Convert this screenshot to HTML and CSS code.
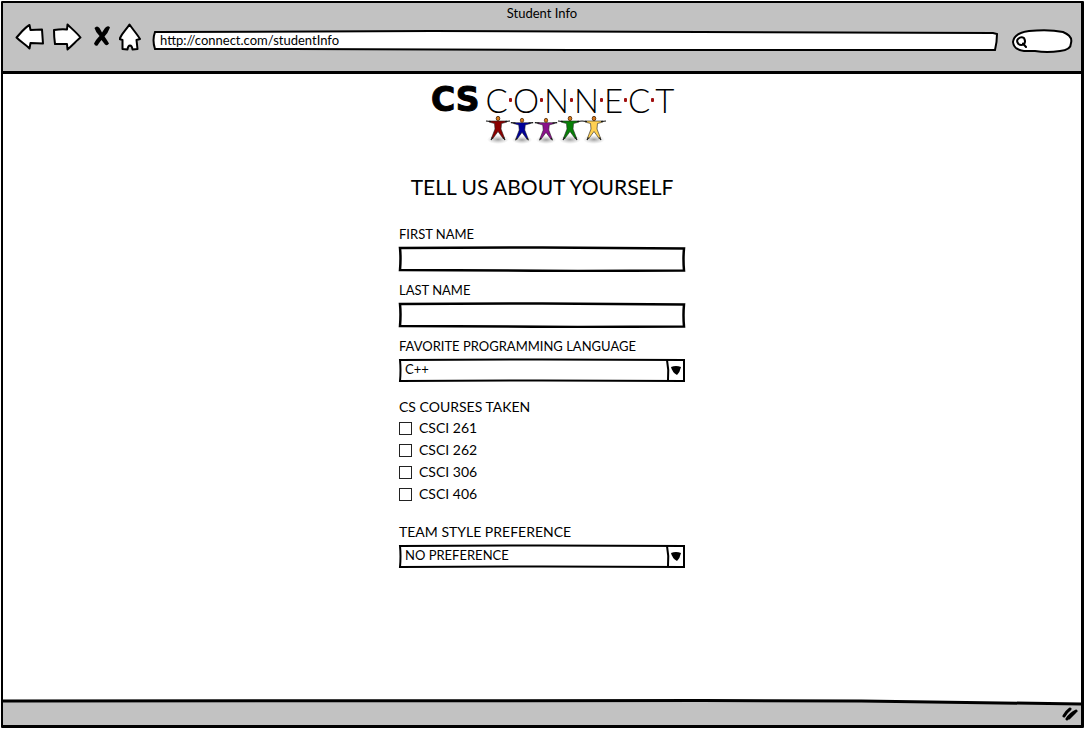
FILE: index.html
```html
<!DOCTYPE html>
<html lang="en">
<head>
<meta charset="utf-8">
<meta name="viewport" content="width=device-width, initial-scale=1">
<title>Student Info</title>
<link rel="stylesheet" href="styles.css">
</head>
<body>
<div class="window">
  <header class="chrome">
    <div class="window-title">Student Info</div>
    <div class="toolbar">
      <nav class="nav-buttons" aria-label="Browser">
        <button type="button" class="nav-button" aria-label="Back">
          <svg width="30" height="30" viewBox="0 0 30 30"><path class="ink" d="M1.5 14.500 C5 11 9 5 14.500 2 L15.500 7 L27 6.500 Q27.500 14 28 20.500 L15.500 20 L14.500 25.500 C10 21 6 19 1.500 14.500Z"/></svg>
        </button>
        <button type="button" class="nav-button" aria-label="Forward">
          <svg width="30" height="30" viewBox="0 0 30 30"><path class="ink" d="M1 7 Q8 6 14 6.500 L14.500 1.500 C18 5 24 10 27.500 14.500 C24 17 20 22 14.500 26.500 L14 21 L2 21 Q1 14 1 7Z"/></svg>
        </button>
        <button type="button" class="nav-button narrow" aria-label="Stop">
          <svg width="18" height="30" viewBox="0 0 18 30"><path d="M1.500 5 Q4 2 6.500 5 L9 9.500 L12 5 Q15 2 17 4.500 Q15 10 11.500 13.500 Q14 17 16 20.500 Q14 23.500 12 21.500 L8.500 17 Q6 20 4.500 22.500 Q2 23.500 1 20.500 Q3 16.500 6.500 13 Q2.500 9 1.500 5Z"/></svg>
        </button>
        <button type="button" class="nav-button home" aria-label="Home">
          <svg width="24" height="30" viewBox="0 0 24 30"><path class="ink" d="M10.500 1.500 C13.500 6 18 11 21 16 L17.500 17 L18.500 26 L13.500 26.500 Q13 22.500 11 22.500 Q9 22.500 8.500 26.500 L3.500 26 L3.500 17 L.500 16 C3 10 7 7 10.500 1.500Z"/></svg>
        </button>
      </nav>
      <input class="address" type="text" aria-label="Address" value="http://connect.com/studentInfo">
      <label class="search">
        <svg class="search-icon" width="12" height="12" viewBox="0 0 12 12"><path class="ink" d="M2 3 Q5 0 8 2 Q10 6 8 8 Q5 10 2.500 8 Q0 5 2 3Z M7 7.500 L10 11"/></svg>
        <input class="search-input" type="search" aria-label="Search">
      </label>
    </div>
  </header>

  <main class="page">
    <div class="logo">
      <div class="wordmark">
        <b class="cs">CS</b>
        <span class="letter">C</span><i class="dot"></i><span class="letter">O</span><i class="dot"></i><span class="letter">N</span><i class="dot"></i><span class="letter">N</span><i class="dot"></i><span class="letter">E</span><i class="dot"></i><span class="letter">C</span><i class="dot"></i><span class="letter">T</span>
      </div>
      <svg class="people" width="126" height="30" viewBox="0 0 126 30" aria-hidden="true">
        <defs>
          <radialGradient id="shade"><stop offset="0" stop-color="#777" stop-opacity=".7"/><stop offset="1" stop-color="#aaa" stop-opacity="0"/></radialGradient>
          <g id="person">
            <ellipse cx="0" cy="23.500" rx="11" ry="4.500" fill="url(#shade)"/>
            <path d="M-9 5 L-3 5 L3 5 L9 5 L9 6 L3.500 7.500 L3 13 L6.500 22 L5.500 23 L0 15.500 L-5.500 23 L-6.500 22 L-3 13 L-3.500 7.500 L-9 6Z" stroke="#222" stroke-width=".6"/>
            <path d="M-12 5 L-7 5.500 M12 5 L7 5.500 M-5.500 21.500 L-7 24 M5.500 21.500 L7 24" stroke="#111" stroke-width="1.200"/>
            <ellipse cx="0" cy="2.500" rx="1.800" ry="2.200" fill="#d87818" stroke="#4a2808" stroke-width=".8"/>
          </g>
        </defs>
        <use href="#person" x="14" y="0" fill="#8b0000"/>
        <use href="#person" fill="#000099" transform="translate(38 2) scale(.93)"/>
        <use href="#person" fill="#8b118b" transform="translate(62 2) scale(.93)"/>
        <use href="#person" x="86" y="0" fill="#078007"/>
        <use href="#person" x="110" y="0" fill="#ffd052"/>
      </svg>
    </div>

    <h1 class="heading">TELL US ABOUT YOURSELF</h1>

    <form class="form">
      <div class="field">
        <label class="label" for="first">FIRST NAME</label>
        <input class="text-box" id="first" type="text">
      </div>
      <div class="field">
        <label class="label" for="last">LAST NAME</label>
        <input class="text-box" id="last" type="text">
      </div>
      <div class="field">
        <label class="label" for="language">FAVORITE PROGRAMMING LANGUAGE</label>
        <select class="drop-down" id="language"><option>C++</option></select>
      </div>
      <fieldset class="courses">
        <legend class="label large">CS COURSES TAKEN</legend>
        <label class="course"><input class="tick" type="checkbox">CSCI 261</label>
        <label class="course"><input class="tick" type="checkbox">CSCI 262</label>
        <label class="course"><input class="tick" type="checkbox">CSCI 306</label>
        <label class="course"><input class="tick" type="checkbox">CSCI 406</label>
      </fieldset>
      <div class="field">
        <label class="label large" for="team">TEAM STYLE PREFERENCE</label>
        <select class="drop-down" id="team"><option>NO PREFERENCE</option></select>
      </div>
    </form>
  </main>

  <footer class="status">
    <svg width="18" height="14" viewBox="0 0 18 14" aria-hidden="true"><path d="M3 9 Q5 5 9 2 M6 12 Q9 7 15 4 M8 11 L14 5" fill="none" stroke="#000" stroke-width="3" stroke-linecap="round"/></svg>
  </footer>
</div>
</body>
</html>
```
FILE: styles.css
```css
* {
  box-sizing: border-box;
}

body {
  margin: 0;
  background: #fff;
  color: #000;
  font-family: Lato, "Open Sans", sans-serif;
  font-size: 14px;
  line-height: 20px;
}

input,
select,
button {
  margin: 0;
  padding: 0;
  border: 0;
  border-radius: 0;
  background: none;
  color: inherit;
  font: inherit;
  appearance: none;
}

.ink {
  fill: #fff;
  stroke: #000;
  stroke-width: 2;
  stroke-linejoin: round;
  stroke-linecap: round;
}

.window {
  display: flex;
  flex-direction: column;
  min-height: calc(100vh - 2px);
  margin: 1px;
  border: solid #000;
  border-width: 2px 3px 3px 2px;
  border-radius: 1px;
}

.chrome {
  padding-bottom: 18px;
  border-bottom: 3px solid #000;
  background: #c2c2c2;
}

.window-title {
  text-align: center;
  font-size: 13px;
}

.toolbar {
  display: flex;
  align-items: flex-start;
  height: 30px;
  padding: 0 8px 0 12px;
}

.nav-buttons {
  display: flex;
  width: 137px;
  height: 30px;
  gap: 8px;
}

.nav-button {
  width: 30px;
  height: 30px;
}

.nav-button svg {
  display: block;
}

.nav-button.narrow {
  width: 18px;
  margin-left: 2px;
}

.nav-button.home {
  width: 24px;
}

.address {
  flex: 1;
  min-width: 0;
  height: 22px;
  margin-top: 7px;
  padding: 0 8px 2px;
  font-size: 13px;
  background: url("data:image/svg+xml,%3Csvg xmlns='http://www.w3.org/2000/svg' viewBox='0 0 845 22' preserveAspectRatio='none'%3E%3Cpath d='M3 2 L280 1 L840 3 L844 4 Q844 12 842 20 L420 20 L140 19 L3 19 Q0 10 3 2Z' fill='white' stroke='black' stroke-width='2' vector-effect='non-scaling-stroke'/%3E%3C/svg%3E") 0 0 / 100% 100% no-repeat;
}

.search {
  display: flex;
  align-items: center;
  width: 62px;
  height: 26px;
  margin: 5px 0 0 13px;
  padding: 2px 8px 0 5px;
  background: url("data:image/svg+xml,%3Csvg xmlns='http://www.w3.org/2000/svg' viewBox='0 0 62 26'%3E%3Cpath d='M2 14 Q3 5 18 3 Q38 1 52 4 Q62 8 60 15 Q60 22 49 23 Q36 25 24 23 L13 23 Q3 22 2 14Z' fill='white' stroke='black' stroke-width='2'/%3E%3C/svg%3E") 0 0 / 100% 100% no-repeat;
}

.search-input {
  width: 32px;
}

.page {
  display: flex;
  flex: 1;
  flex-direction: column;
  align-items: center;
  padding: 10px 16px 24px;
}

.logo {
  width: 244px;
  margin-left: 22px;
}

.wordmark {
  display: flex;
  align-items: center;
  height: 32px;
  font-size: 33px;
  line-height: 32px;
}

.cs {
  margin-right: 6px;
  font-family: "DejaVu Sans", sans-serif;
  -webkit-text-stroke: 1px #000;
}

.letter {
  font-weight: 300;
}

.dot {
  flex: none;
  width: 3px;
  height: 4px;
  margin: 0 1px;
  border-radius: 1px;
  background: #a01010;
}

.people {
  display: block;
  margin-left: 53px;
}

.heading {
  margin: 27px 0 23px;
  font-size: 21px;
  font-weight: 400;
  line-height: 28px;
}

.form {
  display: flex;
  flex-direction: column;
  width: 100%;
  max-width: 288px;
  gap: 8px;
}

.field {
  display: flex;
  flex-direction: column;
  gap: 2px;
}

.label {
  padding: 0 0 0 1px;
  font-size: 13px;
}

.label.large {
  font-size: 14px;
}

.text-box {
  height: 26px;
  padding: 0 6px;
  background: url("data:image/svg+xml,%3Csvg xmlns='http://www.w3.org/2000/svg' viewBox='0 0 288 26' preserveAspectRatio='none'%3E%3Cpath d='M2 2 L144 1.500 L286 2.500 Q285 13 286 24.500 L180 25 L2 24 Q3 12 2 2Z' fill='none' stroke='black' stroke-width='2.500' vector-effect='non-scaling-stroke'/%3E%3C/svg%3E") 0 0 / 100% 100% no-repeat;
}

.drop-down {
  height: 24px;
  padding: 0 24px 2px 7px;
  font-size: 13px;
  background:
    url("data:image/svg+xml,%3Csvg xmlns='http://www.w3.org/2000/svg' width='20' height='24'%3E%3Cpath d='M1 2 Q3 12 2 22' fill='none' stroke='black' stroke-width='2'/%3E%3Cpath d='M5 9 Q10 7 15 9 Q14 14 11 17 Q6 14 5 9Z'/%3E%3C/svg%3E") right 0 top 0 no-repeat,
    url("data:image/svg+xml,%3Csvg xmlns='http://www.w3.org/2000/svg' viewBox='0 0 288 24' preserveAspectRatio='none'%3E%3Cpath d='M2 2 L144 1.500 L286 2 Q286 12 286 23 L144 22.500 L2 23 Q3 12 2 2Z' fill='none' stroke='black' stroke-width='2' vector-effect='non-scaling-stroke'/%3E%3C/svg%3E") 0 0 / 100% 100% no-repeat;
}

.courses {
  margin: 7px 0 9px;
  padding: 0;
  border: 0;
}

.course {
  display: flex;
  align-items: center;
  height: 22px;
  gap: 7px;
}

.tick {
  width: 13px;
  height: 13px;
  margin-left: 1px;
  border: 1px solid #222;
}

.tick:checked {
  background: #000;
  box-shadow: inset 0 0 0 2px #fff;
}

.status {
  display: flex;
  align-items: center;
  justify-content: flex-end;
  height: 26px;
  padding: 4px 2px 0 0;
  background: url("data:image/svg+xml,%3Csvg xmlns='http://www.w3.org/2000/svg' viewBox='0 0 1080 26' preserveAspectRatio='none'%3E%3Cpath d='M0 2 L700 1.500 L860 2 L1080 5 L1080 26 L0 26Z' fill='%23c2c2c2'/%3E%3Cpath d='M0 2 L700 1.500 L860 2 L1080 5' fill='none' stroke='black' stroke-width='3' vector-effect='non-scaling-stroke'/%3E%3C/svg%3E") 0 0 / 100% 100% no-repeat;
}
```
